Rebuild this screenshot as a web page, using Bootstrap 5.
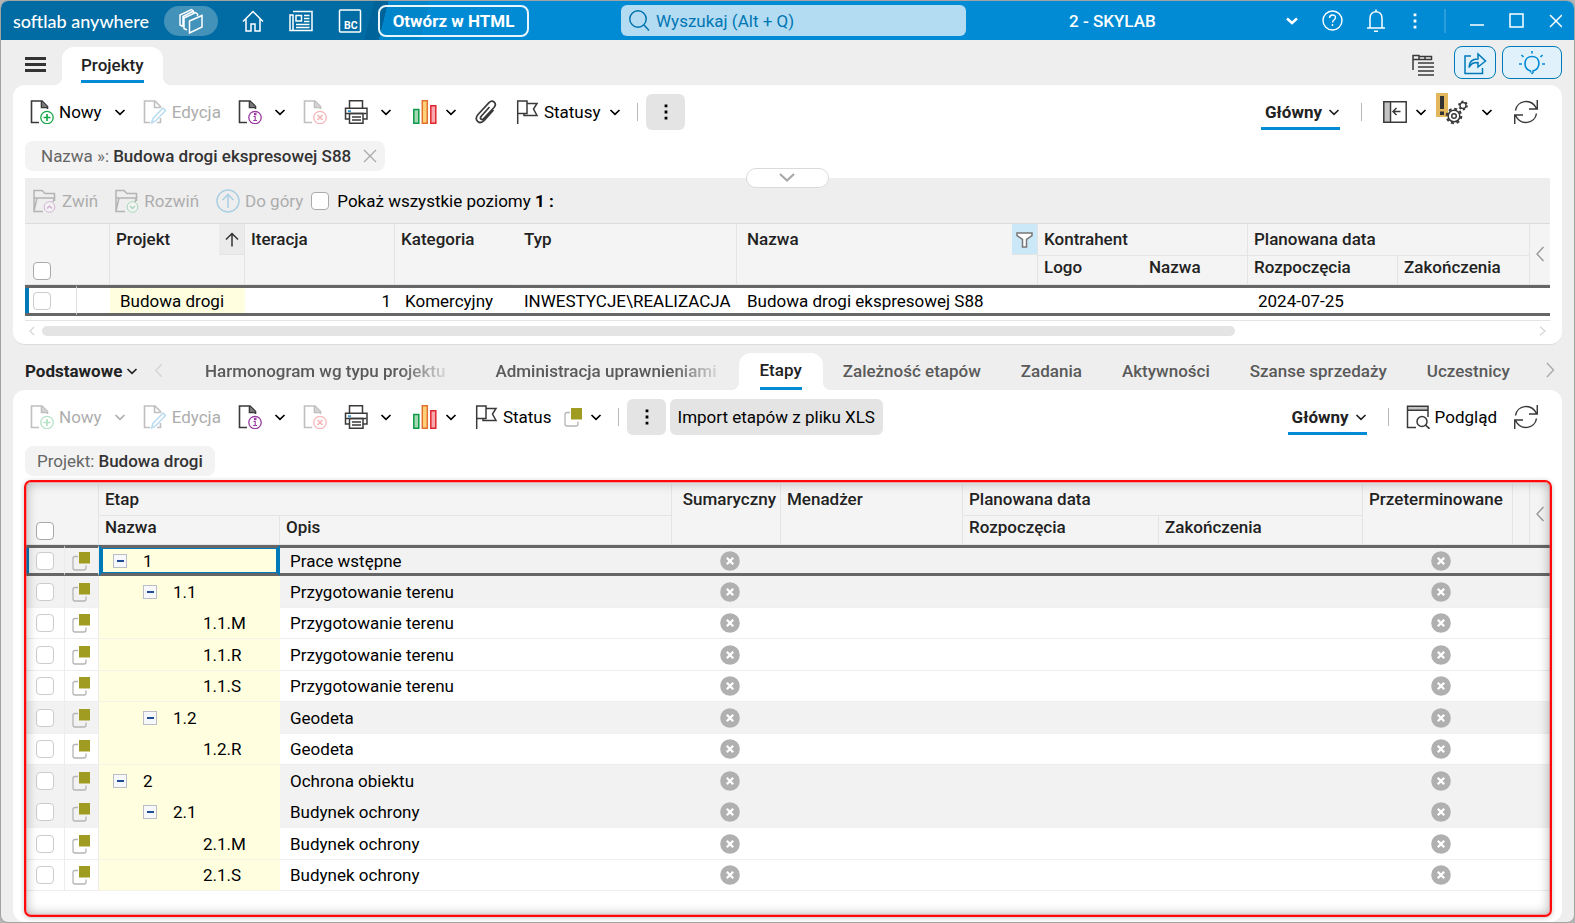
<!DOCTYPE html>
<html lang="pl">
<head>
<meta charset="utf-8">
<meta name="viewport" content="width=device-width, initial-scale=1">
<title>softlab anywhere – Projekty</title>
<link href="https://cdn.jsdelivr.net/npm/bootstrap@5.3.0/dist/css/bootstrap.min.css" rel="stylesheet">
<style>
  :root { --accent: #008bd4; --line: #e4e4e4; --name: #ffffe0; }
  body { font-family: Roboto, "Liberation Sans", sans-serif; font-size: 17px; line-height: 20px; color: #000; background: #b5b5b5; }
  button, input { font: inherit; color: inherit; }
  button { background: none; border: 0; padding: 0; white-space: nowrap; }
  svg { display: block; flex: none; }
  a { color: inherit; text-decoration: none; }

  .win { min-height: 100vh; border: 1px solid #a3a3a3; border-radius: 8px; background: #eee; overflow: hidden; }

  .titlebar { height: 39px; color: #fff; padding: 0 12px;
    background: linear-gradient(104deg, #006ca3 362px, #00639a 362px, #00639a 376px, #0084ca 376px, #0084ca 416px, var(--accent) 416px); }
  .brand { font-family: Lato, sans-serif; font-size: 18px; font-weight: 500; width: 151px; }
  .pill { width: 54px; height: 30px; border-radius: 15px; background: rgba(255,255,255,.26); }
  .html-btn { height: 32px; width: 151px; border: 2px solid #e8f5fc; border-radius: 8px; font-weight: 700; }
  .find { flex: 0 1 345px; margin-left: 92px; height: 31px; border-radius: 6px; background: #b3dcf3; color: #0073ad; padding: 0 8px; gap: 6px; }
  .find input { background: none; border: 0; outline: 0; min-width: 0; padding: 0; }
  .find input::placeholder { color: #0076b3; opacity: 1; }
  .tenant { margin-left: 103px; font-weight: 500; }
  .title-sep { width: 2px; height: 24px; background: #2b9ddb; }

  .tabstrip { height: 45px; padding: 0 12px 0 24px; }
  .tab-on { position: relative; align-self: flex-end; background: #fff; border-radius: 12px 12px 0 0; height: 38px; padding: 0 19px; font-weight: 500; color: #222; }
  .tab-on::before, .tab-on::after { content: ""; position: absolute; bottom: 0; width: 8px; height: 8px; }
  .tab-on::before { left: -8px; background: radial-gradient(circle at 0 0, transparent 8px, #fff 8px); }
  .tab-on::after { right: -8px; background: radial-gradient(circle at 100% 0, transparent 8px, #fff 8px); }
  .tab-on span { display: flex; align-items: center; height: 36px; padding-top: 2px; border-bottom: 3px solid var(--accent); }
  .strip-actions { gap: 6px; margin-left: 20px; }
  .blue-btn { height: 33px; border: 1px solid #0079b8; border-radius: 8px; background: #e0f1fb; }

  .pane { margin: 0 12px; padding: 0 12px; background: #fff; border-radius: 12px; }
  .pane-top { border-bottom: 1px solid #dcdcdc; padding-bottom: 8px; }

  .toolbar { height: 54px; padding: 0 12px 0 5px; }
  .tools { gap: 17px; }
  .tool { display: flex; align-items: center; gap: 12px; }
  .tool.tight { gap: 8px; }
  .tool .lbl { display: flex; align-items: center; gap: 5px; }
  .off { color: #adadad; }
  .off svg:not([width="12"]) { opacity: .32; }
  .sep { width: 1px; height: 18px; background: #b8b8b8; }
  .gray-btn { height: 36px; border-radius: 6px; background: #e4e4e4; }
  .view { display: flex; align-items: center; gap: 6px; height: 36px; padding: 2px 0 0 4px; border-bottom: 3px solid var(--accent); font-weight: 700; color: #222; }

  .chip-row { padding: 2px 0 7px; }
  .chip { height: 30px; border-radius: 8px; background: #f3f3f3; color: #666; }
  .chip b { font-weight: 500; color: #333; }

  .treebar { position: relative; height: 46px; background: #eee; border-bottom: 1px solid #dcdcdc; padding: 0 8px; }
  .fold { position: absolute; left: 50%; top: -10px; margin-left: -42px; width: 83px; height: 20px; border: 1px solid #dadada; border-radius: 10px; background: #fff; color: #a8a8a8; }

  input[type=checkbox] { appearance: none; display: block; width: 18px; height: 18px; margin: 0; border: 1px solid #aaa; border-radius: 4px; background: #fff; }
  td input[type=checkbox] { border-color: #ccc; }

  .gridtab { width: 100%; table-layout: fixed; border-collapse: separate; border-spacing: 0; white-space: nowrap; }
  .gridtab th { background: #f4f4f4; font-weight: 500; color: #222; vertical-align: top; border-right: 1px solid var(--line); border-bottom: 1px solid var(--line); padding: 5px 6px 0; }
  .gridtab th.plain { border-right-color: transparent; }
  .gridtab thead tr:first-child { height: 32px; }
  .gridtab thead tr:last-child { height: 29px; }
  .gridtab thead tr:last-child th { padding-top: 1px; }
  .gridtab th.pick { vertical-align: bottom; padding-bottom: 4px; }
  .gridtab th.gutter { vertical-align: middle; padding: 0 0 0 5px; border-right: 0; color: #999; }
  .gridtab td { padding: 0 10px; border-bottom: 1px solid #eee; }
  .gridtab td:nth-child(6) { padding-left: 6px; }
  .gridtab .current td { height: 31px; border-top: 3px solid #666; border-bottom: 3px solid #666; }
  .gridtab .current td:first-child { box-shadow: inset 4px 0 #0079b8; }
  .gridtab .nm { background: var(--name); }
  .gridtab th.wide { padding-left: 10px; }
  .corner { position: absolute; right: 0; top: 0; width: 25px; height: 31px; background: #ebebeb; border-bottom: 1px solid var(--line); }
  .corner.filter { background: #cbe8f8; }

  .hbar { height: 10px; gap: 5px; margin-top: 5px; color: #d4d4d4; padding: 0 3px; }
  .hbar .track { flex: 1; }
  .hbar .thumb { height: 10px; border-radius: 5px; background: #e4e4e4; }
  .under { height: 5px; border-bottom: 1px solid var(--line); }

  .subtabs { height: 45px; padding: 0 12px 0 24px; font-weight: 500; color: #5a5a5a; white-space: nowrap; }
  .subtabs .item { padding: 6px 20px 0; }
  .subtabs .faded { padding-right: 30px; -webkit-mask-image: linear-gradient(90deg, #000 calc(100% - 76px), rgba(0,0,0,.2) calc(100% - 32px)); mask-image: linear-gradient(90deg, #000 calc(100% - 76px), rgba(0,0,0,.2) calc(100% - 32px)); }
  .subtabs .tab-on { height: 37px; padding: 0 21px; margin-left: -8px; }
  .subtabs .tab-on span { height: 37px; padding-top: 0; }
  .subtabs .lead-tab { color: #222; font-weight: 700; width: 160px; padding-top: 6px; }

  .marked { position: relative; margin: -3px -2px 5px -1px; padding: 4px 2px 0 1px; }
  .marked::after { content: ""; position: absolute; inset: 0; border: 2px solid #ff0a0a; border-radius: 7px; pointer-events: none;
    box-shadow: inset 0 0 0 1px rgba(255,90,90,.45), inset 0 0 12px rgba(0,0,0,.32), 0 1px 5px rgba(0,0,0,.22); }
  .stages tbody tr { height: 32px; }
  .stages tbody tr:nth-child(odd) { height: 31px; }
  .stages th.pick, .stages td:first-child { padding: 0 0 0 11px; }
  .stages th.pick { padding-bottom: 4px; }
  .stages td:first-child, .stages td:nth-child(2) { border-right: 1px solid #ececec; }
  .stages td:nth-child(2) { padding: 0 0 0 7px; }
  .stages td.nm { border-bottom-color: #f4f4ea; }
  .stages .sum td { background: #f2f2f2; border-bottom-color: #f0f0f0; }
  .stages .sum td.nm { background: var(--name); border-bottom-color: var(--name); }
  .stages .current td.nm, .stages .current td { border-bottom-color: #666 !important; }
  .stages .current td.nm { box-shadow: inset 0 0 0 1px #0079b8; border-left: 3px solid #0079b8; border-right: 3px solid #0079b8; padding-left: 10px; }
  .stages td.no { padding: 0 0 0 6px; }
  .stages td.no svg { margin: auto; }
  .node { display: flex; align-items: center; gap: 16px; }
  .lvl1 { padding-left: 4px; } .current .lvl1 { padding-left: 1px; }
  .lvl2 { padding-left: 34px; } .lvl3 { padding-left: 94px; }
  .box { width: 14px; height: 14px; border: 1px solid #b9bec8; background: #f6f8fc; display: flex; align-items: center; justify-content: center; }
  .box::before { content: ""; width: 7px; height: 2px; background: #1f4e96; }
</style>
</head>
<body>

<svg width="0" height="0" class="position-absolute" aria-hidden="true">
  <defs>
    <symbol id="page" viewBox="0 0 24 24"><path d="M9 22.500H1.500V1H12l5.500 5.500V9M11.500 1v6.500h6" fill="none" stroke="#3a3a3a" stroke-width="1.600"/><path d="M12 2v5h5z" fill="#777"/></symbol>
    <symbol id="new" viewBox="0 0 24 24"><use href="#page"/><circle cx="17" cy="17.500" r="6.200" fill="#fff" stroke="#16a84a" stroke-width="1.300"/><path d="M17 14v7M13.500 17.500h7" stroke="#16a84a" stroke-width="1.700"/></symbol>
    <symbol id="edit" viewBox="0 0 24 24"><path d="M7 22.500H1.500V1H12l5.500 5.500V8M11.500 1v6.500h6M14 22.500h3.500V18" fill="none" stroke="#3a3a3a" stroke-width="1.600"/><path d="M8.500 23l1.500-4.500L20 8l2.500 2.500L12.500 21z" fill="#fff" stroke="#2a93d0" stroke-width="1.500"/></symbol>
    <symbol id="info" viewBox="0 0 24 24"><use href="#page"/><circle cx="17" cy="17.500" r="6.200" fill="#fff" stroke="#9838a0" stroke-width="1.300"/><path d="M15.500 16.500h1.700v4M15.300 20.500h3.800M16.500 13.300h1.400v1.300h-1.400z" fill="none" stroke="#9838a0" stroke-width="1.100"/></symbol>
    <symbol id="del" viewBox="0 0 24 24"><use href="#page"/><circle cx="17" cy="17.500" r="6.200" fill="#fff" stroke="#e8202a" stroke-width="1.300"/><path d="M14.500 15l5 5M19.500 15l-5 5" stroke="#e8202a" stroke-width="1.700"/></symbol>
    <symbol id="print" viewBox="0 0 24 24"><g fill="none" stroke="#3a3a3a" stroke-width="1.500"><path d="M5.500 8V.8h13V8M5 19H1.500V8.200h21.500V19H19"/><path d="M5.500 13.500h13.500v9.700H5.500z" fill="#fff"/><path d="M1.500 13.500h21M8 17h9M8 20h9"/></g><path d="M4 10.300h3v1.600H4z" fill="#2a93d0"/></symbol>
    <symbol id="bars" viewBox="0 0 28 24"><path d="M4.800 9.500h5v13.700h-5z" fill="#a5d9b5" stroke="#0c9a48" stroke-width="1.500"/><path d="M13.300.8h5v22.400h-5z" fill="#ffd27a" stroke="#e2702e" stroke-width="1.500"/><path d="M21.800 5.800h5v17.400h-5z" fill="#f7a8ae" stroke="#e0272f" stroke-width="1.500"/></symbol>
    <symbol id="clip" viewBox="0 0 24 24"><path d="M15.500 7L7 16.500c-1.600 2 .8 4 2.500 2.300L20 7.500c3.500-4-1.200-8.500-5-4.800L4 14.500c-4.500 5.500 1.500 10.500 6 6.200L19.500 10" fill="none" stroke="#3a3a3a" stroke-width="1.700"/></symbol>
    <symbol id="flag" viewBox="0 0 24 24"><path d="M2.700 24V1H12v12.500H3M12 3.500h10l-3.500 5.500 3.500 6.500H9v-2" fill="none" stroke="#3a3a3a" stroke-width="1.500"/></symbol>
    <symbol id="chev" viewBox="0 0 12 12"><path d="M1.500 4l4.500 4.300L10.500 4" fill="none" stroke="currentColor" stroke-width="1.700"/></symbol>
    <symbol id="left" viewBox="0 0 10 16"><path d="M8.500 1L2 8l6.500 7" fill="none" stroke="currentColor" stroke-width="1.400"/></symbol>
    <symbol id="dots" viewBox="0 0 4 18"><path d="M.6 1.500h2.800v2.800H.6zM.6 7.600h2.800v2.800H.6zM.6 13.700h2.800v2.800H.6z" fill="currentColor"/></symbol>
    <symbol id="refresh" viewBox="0 0 24 24"><path d="M1.500 10.500C3 .5 17-2.500 22.500 8.500M23.300 0v9H15M22.500 13.500C21 23.500 7 26.500 1.500 15.500M.7 24v-9H9" fill="none" stroke="#3a3a3a" stroke-width="1.500"/></symbol>
    <symbol id="folder" viewBox="0 0 24 24"><path d="M10 22.500H1V1.500h8l3 3h9.500V12M1 9h20.500L20 13M1 22l3-13" fill="none" stroke="#3a3a3a" stroke-width="1.500"/></symbol>
    <symbol id="stat" viewBox="0 0 18 20"><path d="M6 5.500H3a2 2 0 0 0-2 2V17a2 2 0 0 0 2 2h9a2 2 0 0 0 2-2v-2.500" fill="none" stroke="#b5b5b5" stroke-width="1.300"/><path d="M7 1h11v11.500H7z" fill="#a09c22"/></symbol>
    <symbol id="nope" viewBox="0 0 20 20"><circle cx="10" cy="10" r="9.800" fill="#b0b0b0"/><path d="M6.800 6.800l6.400 6.400M13.200 6.800l-6.400 6.400" stroke="#fff" stroke-width="2.300"/></symbol>
  </defs>
</svg>

<div class="win d-flex flex-column">
  <header class="titlebar d-flex align-items-center">
    <span class="brand">softlab anywhere</span>
    <button class="pill d-flex align-items-center justify-content-center" aria-label="Okna"><svg width="26" height="26" viewBox="0 0 26 26" fill="none" stroke="#fff" stroke-width="1.500"><path d="M5 18.500l-3-1.500V7L13.500 1.500l2 1.500v2M9 22l-3-1.500V10L17.500 4.500l2 1.500v2M5 18.500V8.500L15.500 3"/><path d="M11.500 13L24 7.500V19l-12.500 6z"/></svg></button>
    <button class="ms-4" aria-label="Start"><svg width="22" height="22" viewBox="0 0 22 22" fill="none" stroke="#fff" stroke-width="1.500"><path d="M1 11.500L11 1.500l10 10M4 9v12h5v-7h4v7h5V9"/></svg></button>
    <button class="ms-4" aria-label="Wiadomości"><svg width="26" height="22" viewBox="-1 0 26 22" fill="none" stroke="#fff" stroke-width="1.500"><path d="M4 1.500h19V20.500H1V5h3v15.500M7 5.500h5.500V11H7zM15 5.500h5.500M15 8.500h5.500M15 11.500h5.500M7 14.500h13.500M7 17.500h13.500"/></svg></button>
    <button class="ms-4" aria-label="BC"><svg width="24" height="24" viewBox="0 0 24 24"><rect x="1.500" y="1" width="21" height="22" rx="1" fill="none" stroke="#fff" stroke-width="1.500"/><text x="6" y="20" font-size="10.500" font-weight="700" fill="#fff" font-family="Roboto">BC</text></svg></button>
    <button class="html-btn ms-3">Otwórz w HTML</button>
    <label class="find d-flex align-items-center"><svg width="21" height="21" viewBox="0 0 21 21" fill="none" stroke="#0073ad" stroke-width="1.500"><circle cx="9" cy="9" r="8.200"/><path d="M15 15l5 5.500"/></svg><input type="text" placeholder="Wyszukaj (Alt + Q)" aria-label="Wyszukaj"></label>
    <span class="tenant">2 - SKYLAB</span>
    <div class="d-flex align-items-center ms-auto gap-4">
      <button aria-label="Wybierz"><svg width="12" height="12" viewBox="0 0 12 12"><path d="M1 3.500l5 4.500 5-4.500" fill="none" stroke="#fff" stroke-width="2.500"/></svg></button>
      <button aria-label="Pomoc"><svg width="21" height="21" viewBox="0 0 21 21" fill="none" stroke="#fff" stroke-width="1.400"><circle cx="10.500" cy="10.500" r="9.500"/><path d="M7.500 8c0-4 6-4 6-.5 0 2.500-3 2.500-3 5M10.500 14v2"/></svg></button>
      <button aria-label="Powiadomienia"><svg width="18" height="23" viewBox="0 0 18 23" fill="none" stroke="#fff" stroke-width="1.500"><path d="M3 19V9c0-8.500 12-8.500 12 0v10M0 19h18M9 .5v2M7 22.200h4"/></svg></button>
      <button aria-label="Więcej"><svg width="11" height="18" viewBox="-4 0 11 18"><use href="#dots" width="4" height="18"/></svg></button>
      <span class="title-sep"></span>
      <button aria-label="Minimalizuj"><svg width="15" height="16" viewBox="0 0 15 16"><path d="M0 12h14" stroke="#fff" stroke-width="1.500"/></svg></button>
      <button aria-label="Maksymalizuj"><svg width="16" height="16" viewBox="0 0 16 16"><path d="M1 1h13v13H1z" fill="none" stroke="#fff" stroke-width="1.500"/></svg></button>
      <button aria-label="Zamknij"><svg width="13" height="14" viewBox="0 0 13 14"><path d="M1 1l12 12M13 1L1 13" stroke="#fff" stroke-width="1.500"/></svg></button>
    </div>
  </header>

  <nav class="tabstrip d-flex align-items-center">
    <button class="me-3 pt-1" aria-label="Menu"><svg width="21" height="16" viewBox="0 0 21 16"><path d="M0 1.500h21M0 7.500h21M0 13.500h21" stroke="#333" stroke-width="3"/></svg></button>
    <a href="#" class="tab-on"><span>Projekty</span></a>
    <button class="ms-auto pt-1" aria-label="Lista"><svg width="22" height="22" viewBox="0 0 22 22" fill="none" stroke="#3a3a3a" stroke-width="1.500"><path d="M1 16V1.500h6v4H1M7 2.500h12.500v3H7M13 2.500v3M6 9h16M6 13h16M6 17h16M6 21h16"/></svg></button>
    <div class="strip-actions d-flex">
      <button class="blue-btn px-2" aria-label="Udostępnij"><svg width="24" height="24" viewBox="0 0 24 24" fill="none" stroke="#0079b8" stroke-width="1.500"><path d="M8 5H2v17.500h17.500V17"/><path d="M6 16.500c0-6 3-8.500 9-8.500V3l7.500 7-7.500 6v-4.500c-5 0-7 1-9 5z"/></svg></button>
      <button class="blue-btn px-3" aria-label="Podpowiedź"><svg width="26" height="24" viewBox="1 0 26 24" fill="none" stroke="#008bd4" stroke-width="1.600"><path d="M12.500 21.500v-1.500C4.500 17 5.500 5.500 14 5.500S23.500 17 15 20v1.500l-1.500 1.500M14 0v2.500M1 13h3M24 13h3M3.500 4l2 2M24.500 4l-2 2"/></svg></button>
    </div>
  </nav>

  <section class="pane pane-top">
    <div class="toolbar d-flex align-items-center">
      <div class="tools d-flex align-items-center">
        <button class="tool"><span class="lbl"><svg width="24" height="24"><use href="#new"/></svg>Nowy</span><svg width="12" height="12"><use href="#chev"/></svg></button>
        <button class="tool off"><span class="lbl"><svg width="24" height="24"><use href="#edit"/></svg>Edycja</span></button>
        <button class="tool" aria-label="Informacje"><svg width="24" height="24"><use href="#info"/></svg><svg width="12" height="12"><use href="#chev"/></svg></button>
        <button class="tool off" aria-label="Usuń"><svg width="24" height="24"><use href="#del"/></svg></button>
        <button class="tool" aria-label="Drukuj"><svg width="24" height="24"><use href="#print"/></svg><svg width="12" height="12"><use href="#chev"/></svg></button>
        <button class="tool tight" aria-label="Wykresy"><svg width="28" height="24"><use href="#bars"/></svg><svg width="12" height="12"><use href="#chev"/></svg></button>
        <button class="tool" aria-label="Załączniki"><svg width="24" height="24"><use href="#clip"/></svg></button>
        <button class="tool tight"><span class="lbl"><svg width="24" height="24"><use href="#flag"/></svg>Statusy</span><svg width="12" height="12"><use href="#chev"/></svg></button>
      </div>
      <span class="sep ms-3 me-2"></span>
      <button class="gray-btn px-3" aria-label="Więcej"><svg width="7" height="18" viewBox="-2 0 7 18"><use href="#dots" width="4" height="18"/></svg></button>
      <div class="d-flex align-items-center ms-auto tools">
        <button class="view"><span>Główny</span><svg width="12" height="12"><use href="#chev"/></svg></button>
        <span class="sep mx-1"></span>
        <div class="d-flex align-items-center gap-2">
          <button class="tool tight" aria-label="Panel boczny"><svg width="24" height="22" viewBox="0 0 24 22"><path d="M.8.800h6v20.400h-6z" fill="#c4c4c4"/><path d="M.8.800h22.400v20.400H.8zM7.500 1v20M17.500 10.500h-7.500M13.500 7l-3.500 3.500 3.500 3.500" fill="none" stroke="#3a3a3a" stroke-width="1.500"/></svg><svg width="12" height="12"><use href="#chev"/></svg></button>
          <button class="tool" aria-label="Ustawienia z ostrzeżeniem"><svg width="34" height="38" viewBox="0 0 34 38"><path d="M1 0h12v24H1z" fill="#e3b75c"/><path d="M5 3h4v13H5zM5 18.500h4V22H5z" fill="#333"/><g fill="none" stroke="#3a3a3a"><circle cx="19" cy="23" r="5.800" stroke-width="1.500"/><circle cx="19" cy="23" r="7.300" stroke-width="2" stroke-dasharray="3 2.730"/><circle cx="19" cy="23" r="2.300" stroke-width="1.500"/><circle cx="28" cy="12.500" r="3" stroke-width="1.400"/><circle cx="28" cy="12.500" r="4" stroke-width="1.800" stroke-dasharray="2 2.190"/></g></svg><svg width="12" height="12"><use href="#chev"/></svg></button>
        </div>
        <button class="ps-1" aria-label="Odśwież"><svg width="24" height="24"><use href="#refresh"/></svg></button>
      </div>
    </div>

    <div class="d-flex chip-row">
      <div class="chip d-flex align-items-center gap-1 ps-3 pe-2"><span>Nazwa »:</span><b>Budowa drogi ekspresowej S88</b><button class="ms-2" aria-label="Usuń filtr"><svg width="14" height="14" viewBox="0 0 14 14"><path d="M1 1l12 12M13 1L1 13" stroke="#aaa" stroke-width="1.300"/></svg></button></div>
    </div>

    <div class="treebar d-flex align-items-center">
      <button class="fold d-flex align-items-center justify-content-center" aria-label="Rozwiń panel"><svg width="18" height="12" viewBox="0 0 18 12"><path d="M2 2l7 6.500L16 2" fill="none" stroke="currentColor" stroke-width="2.200"/></svg></button>
      <div class="tools d-flex align-items-center">
        <button class="tool off"><span class="lbl"><svg width="24" height="24" viewBox="0 0 24 24"><use href="#folder"/><circle cx="16.500" cy="18" r="5.300" fill="#fff" stroke="#9838a0"/><path d="M14 19.500l2.500-2.500 2.500 2.500" fill="none" stroke="#9838a0" stroke-width="1.500"/></svg>Zwiń</span></button>
        <button class="tool off"><span class="lbl"><svg width="24" height="24" viewBox="0 0 24 24"><use href="#folder"/><circle cx="17.500" cy="18" r="5.300" fill="#fff" stroke="#16a84a"/><path d="M15 17l2.500 2.500L20 17" fill="none" stroke="#16a84a" stroke-width="1.500"/></svg>Rozwiń</span></button>
        <button class="tool off"><span class="lbl"><svg width="24" height="24" viewBox="0 0 24 24" fill="none" stroke="#2a93d0" stroke-width="1.600"><circle cx="12" cy="12" r="11"/><path d="M12 19V5.500M6.500 11L12 5.500l5.500 5.500"/></svg>Do góry</span></button>
      </div>
      <input type="checkbox" id="levels" class="mx-2"><label for="levels">Pokaż wszystkie poziomy <b>1 :</b></label>
    </div>

    <table class="gridtab">
      <colgroup><col style="width:52px"><col style="width:33px"><col style="width:135px"><col style="width:150px"><col style="width:123px"><col style="width:219px"><col><col style="width:105px"><col style="width:105px"><col style="width:150px"><col style="width:132px"><col style="width:20px"></colgroup>
      <thead>
        <tr><th rowspan="2" colspan="2" class="pick ps-2"><input type="checkbox" aria-label="Zaznacz wszystkie"></th><th rowspan="2" class="position-relative">Projekt<span class="corner d-flex justify-content-center pt-2"><svg width="14" height="15" viewBox="0 0 14 15"><path d="M7 14.500V1.500M1 7.500l6-6 6 6" fill="none" stroke="#333" stroke-width="1.500"/></svg></span></th><th rowspan="2">Iteracja</th><th rowspan="2" class="plain">Kategoria</th><th rowspan="2">Typ</th><th rowspan="2" class="position-relative wide">Nazwa<span class="corner filter d-flex justify-content-center pt-2"><svg width="17" height="16" viewBox="0 0 17 16"><path d="M1 1h15v2.500l-5.500 4V15h-4V7.500L1 3.500z" fill="#fff" stroke="#777" stroke-width="1.500"/></svg></span></th><th colspan="2">Kontrahent</th><th colspan="2">Planowana data</th><th rowspan="2" class="gutter"><svg width="10" height="16"><use href="#left"/></svg></th></tr>
        <tr><th class="plain">Logo</th><th>Nazwa</th><th>Rozpoczęcia</th><th>Zakończenia</th></tr>
      </thead>
      <tbody>
        <tr class="current"><td class="ps-2 border-end"><input type="checkbox" aria-label="Zaznacz Budowa drogi"></td><td></td><td class="nm">Budowa drogi</td><td class="text-end pe-1">1</td><td>Komercyjny</td><td>INWESTYCJE\REALIZACJA</td><td>Budowa drogi ekspresowej S88</td><td></td><td></td><td>2024-07-25</td><td></td><td></td></tr>
      </tbody>
    </table>
    <div class="under"></div>
    <div class="hbar d-flex align-items-center"><svg width="9" height="10" viewBox="0 0 10 12"><path d="M7 1L2 6l5 5" fill="none" stroke="currentColor" stroke-width="1.500"/></svg><div class="track"><div class="thumb" style="width:80%"></div></div><svg width="9" height="10" viewBox="0 0 10 12"><path d="M2 1l6 5-6 5" fill="none" stroke="currentColor" stroke-width="1.500"/></svg></div>
  </section>

  <nav class="subtabs d-flex align-items-center">
    <a href="#" class="lead-tab d-flex align-items-center">Podstawowe<svg width="12" height="12" class="ms-1 me-3"><use href="#chev"/></svg><svg width="9" height="15" viewBox="0 0 10 16" color="#d4d4d4"><use href="#left"/></svg></a>
    <a href="#" class="item faded">Harmonogram wg typu projektu</a>
    <a href="#" class="item faded">Administracja uprawnieniami</a>
    <a href="#" class="tab-on"><span>Etapy</span></a>
    <a href="#" class="item">Zależność etapów</a>
    <a href="#" class="item">Zadania</a>
    <a href="#" class="item">Aktywności</a>
    <a href="#" class="item">Szanse sprzedaży</a>
    <a href="#" class="item">Uczestnicy</a>
    <button class="ms-auto pt-1" aria-label="Dalej"><svg width="20" height="16" viewBox="0 0 20 16"><path d="M5 1l6.500 7L5 15" fill="none" stroke="#aaa" stroke-width="1.400"/></svg></button>
  </nav>

  <section class="pane flex-grow-1 d-flex flex-column">
    <div class="toolbar d-flex align-items-center">
      <div class="tools d-flex align-items-center">
        <button class="tool off"><span class="lbl"><svg width="24" height="24"><use href="#new"/></svg>Nowy</span><svg width="12" height="12"><use href="#chev"/></svg></button>
        <button class="tool off"><span class="lbl"><svg width="24" height="24"><use href="#edit"/></svg>Edycja</span></button>
        <button class="tool" aria-label="Informacje"><svg width="24" height="24"><use href="#info"/></svg><svg width="12" height="12"><use href="#chev"/></svg></button>
        <button class="tool off" aria-label="Usuń"><svg width="24" height="24"><use href="#del"/></svg></button>
        <button class="tool" aria-label="Drukuj"><svg width="24" height="24"><use href="#print"/></svg><svg width="12" height="12"><use href="#chev"/></svg></button>
        <button class="tool tight" aria-label="Wykresy"><svg width="28" height="24"><use href="#bars"/></svg><svg width="12" height="12"><use href="#chev"/></svg></button>
        <button class="tool"><span class="lbl"><svg width="24" height="24"><use href="#flag"/></svg>Status</span><span class="tool tight"><svg width="18" height="20"><use href="#stat"/></svg><svg width="12" height="12"><use href="#chev"/></svg></span></button>
      </div>
      <span class="sep ms-3 me-2"></span>
      <button class="gray-btn px-3 me-1" aria-label="Więcej"><svg width="7" height="18" viewBox="-2 0 7 18"><use href="#dots" width="4" height="18"/></svg></button>
      <button class="gray-btn px-2">Import etapów z pliku XLS</button>
      <div class="d-flex align-items-center ms-auto tools">
        <button class="view"><span>Główny</span><svg width="12" height="12"><use href="#chev"/></svg></button>
        <span class="sep ms-1"></span>
        <button class="tool"><span class="lbl"><svg width="24" height="24" viewBox="0 0 24 24"><path d="M1.500 1.500h20.500v3.500H1.500z" fill="#c4c4c4"/><path d="M10 22.500H1.500V1.200h20.500V12M1.500 5.200h20.500" fill="none" stroke="#3a3a3a" stroke-width="1.500"/><circle cx="16" cy="16.500" r="5" fill="#fff" stroke="#3a3a3a" stroke-width="1.500"/><path d="M19.500 20l4 3.800" stroke="#3a3a3a" stroke-width="1.700"/></svg>Podgląd</span></button>
        <button aria-label="Odśwież"><svg width="24" height="24"><use href="#refresh"/></svg></button>
      </div>
    </div>
    <div class="d-flex chip-row">
      <div class="chip d-flex align-items-center gap-1 px-2"><span class="ps-1">Projekt:</span><b class="pe-1">Budowa drogi</b></div>
    </div>

    <div class="marked flex-grow-1">
      <table class="gridtab stages">
        <colgroup><col style="width:40px"><col style="width:34px"><col style="width:181px"><col><col style="width:109px"><col style="width:182px"><col style="width:196px"><col style="width:204px"><col style="width:150px"><col style="width:17px"><col style="width:20px"></colgroup>
        <thead>
          <tr><th rowspan="2" colspan="2" class="pick"><input type="checkbox" aria-label="Zaznacz wszystkie etapy"></th><th colspan="2">Etap</th><th rowspan="2" class="text-end pe-1">Sumaryczny</th><th rowspan="2">Menadżer</th><th colspan="2">Planowana data</th><th rowspan="2">Przeterminowane</th><th rowspan="2"></th><th rowspan="2" class="gutter"><svg width="10" height="16"><use href="#left"/></svg></th></tr>
          <tr><th>Nazwa</th><th>Opis</th><th>Rozpoczęcia</th><th>Zakończenia</th></tr>
        </thead>
        <tbody>
          <tr class="sum current"><td><input type="checkbox" aria-label="1"></td><td><svg width="18" height="20"><use href="#stat"/></svg></td><td class="nm"><div class="node lvl1"><span class="box"></span>1</div></td><td>Prace wstępne</td><td class="no"><svg width="20" height="20"><use href="#nope"/></svg></td><td></td><td></td><td></td><td class="no"><svg width="20" height="20"><use href="#nope"/></svg></td><td></td><td></td></tr>
          <tr class="sum"><td><input type="checkbox" aria-label="1.1"></td><td><svg width="18" height="20"><use href="#stat"/></svg></td><td class="nm"><div class="node lvl2"><span class="box"></span>1.1</div></td><td>Przygotowanie terenu</td><td class="no"><svg width="20" height="20"><use href="#nope"/></svg></td><td></td><td></td><td></td><td class="no"><svg width="20" height="20"><use href="#nope"/></svg></td><td></td><td></td></tr>
          <tr><td><input type="checkbox" aria-label="1.1.M"></td><td><svg width="18" height="20"><use href="#stat"/></svg></td><td class="nm"><div class="node lvl3">1.1.M</div></td><td>Przygotowanie terenu</td><td class="no"><svg width="20" height="20"><use href="#nope"/></svg></td><td></td><td></td><td></td><td class="no"><svg width="20" height="20"><use href="#nope"/></svg></td><td></td><td></td></tr>
          <tr><td><input type="checkbox" aria-label="1.1.R"></td><td><svg width="18" height="20"><use href="#stat"/></svg></td><td class="nm"><div class="node lvl3">1.1.R</div></td><td>Przygotowanie terenu</td><td class="no"><svg width="20" height="20"><use href="#nope"/></svg></td><td></td><td></td><td></td><td class="no"><svg width="20" height="20"><use href="#nope"/></svg></td><td></td><td></td></tr>
          <tr><td><input type="checkbox" aria-label="1.1.S"></td><td><svg width="18" height="20"><use href="#stat"/></svg></td><td class="nm"><div class="node lvl3">1.1.S</div></td><td>Przygotowanie terenu</td><td class="no"><svg width="20" height="20"><use href="#nope"/></svg></td><td></td><td></td><td></td><td class="no"><svg width="20" height="20"><use href="#nope"/></svg></td><td></td><td></td></tr>
          <tr class="sum"><td><input type="checkbox" aria-label="1.2"></td><td><svg width="18" height="20"><use href="#stat"/></svg></td><td class="nm"><div class="node lvl2"><span class="box"></span>1.2</div></td><td>Geodeta</td><td class="no"><svg width="20" height="20"><use href="#nope"/></svg></td><td></td><td></td><td></td><td class="no"><svg width="20" height="20"><use href="#nope"/></svg></td><td></td><td></td></tr>
          <tr><td><input type="checkbox" aria-label="1.2.R"></td><td><svg width="18" height="20"><use href="#stat"/></svg></td><td class="nm"><div class="node lvl3">1.2.R</div></td><td>Geodeta</td><td class="no"><svg width="20" height="20"><use href="#nope"/></svg></td><td></td><td></td><td></td><td class="no"><svg width="20" height="20"><use href="#nope"/></svg></td><td></td><td></td></tr>
          <tr class="sum"><td><input type="checkbox" aria-label="2"></td><td><svg width="18" height="20"><use href="#stat"/></svg></td><td class="nm"><div class="node lvl1"><span class="box"></span>2</div></td><td>Ochrona obiektu</td><td class="no"><svg width="20" height="20"><use href="#nope"/></svg></td><td></td><td></td><td></td><td class="no"><svg width="20" height="20"><use href="#nope"/></svg></td><td></td><td></td></tr>
          <tr class="sum"><td><input type="checkbox" aria-label="2.1"></td><td><svg width="18" height="20"><use href="#stat"/></svg></td><td class="nm"><div class="node lvl2"><span class="box"></span>2.1</div></td><td>Budynek ochrony</td><td class="no"><svg width="20" height="20"><use href="#nope"/></svg></td><td></td><td></td><td></td><td class="no"><svg width="20" height="20"><use href="#nope"/></svg></td><td></td><td></td></tr>
          <tr><td><input type="checkbox" aria-label="2.1.M"></td><td><svg width="18" height="20"><use href="#stat"/></svg></td><td class="nm"><div class="node lvl3">2.1.M</div></td><td>Budynek ochrony</td><td class="no"><svg width="20" height="20"><use href="#nope"/></svg></td><td></td><td></td><td></td><td class="no"><svg width="20" height="20"><use href="#nope"/></svg></td><td></td><td></td></tr>
          <tr><td><input type="checkbox" aria-label="2.1.S"></td><td><svg width="18" height="20"><use href="#stat"/></svg></td><td class="nm"><div class="node lvl3">2.1.S</div></td><td>Budynek ochrony</td><td class="no"><svg width="20" height="20"><use href="#nope"/></svg></td><td></td><td></td><td></td><td class="no"><svg width="20" height="20"><use href="#nope"/></svg></td><td></td><td></td></tr>
        </tbody>
      </table>
    </div>
  </section>
</div>

<script src="https://cdn.jsdelivr.net/npm/bootstrap@5.3.0/dist/js/bootstrap.bundle.min.js"></script>
</body>
</html>
